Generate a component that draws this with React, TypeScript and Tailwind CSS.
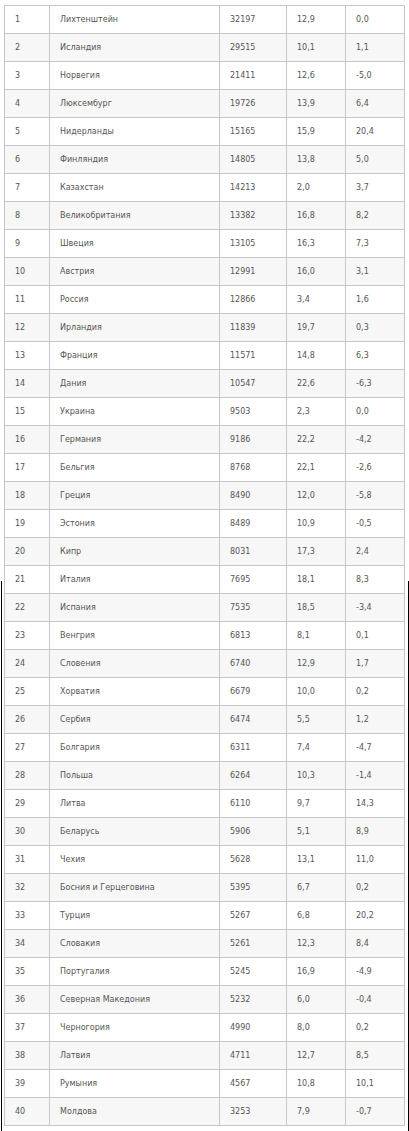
const rows: [string, string, string, string][] = [
  ["Лихтенштейн", "32197", "12,9", "0,0"],
  ["Исландия", "29515", "10,1", "1,1"],
  ["Норвегия", "21411", "12,6", "-5,0"],
  ["Люксембург", "19726", "13,9", "6,4"],
  ["Нидерланды", "15165", "15,9", "20,4"],
  ["Финляндия", "14805", "13,8", "5,0"],
  ["Казахстан", "14213", "2,0", "3,7"],
  ["Великобритания", "13382", "16,8", "8,2"],
  ["Швеция", "13105", "16,3", "7,3"],
  ["Австрия", "12991", "16,0", "3,1"],
  ["Россия", "12866", "3,4", "1,6"],
  ["Ирландия", "11839", "19,7", "0,3"],
  ["Франция", "11571", "14,8", "6,3"],
  ["Дания", "10547", "22,6", "-6,3"],
  ["Украина", "9503", "2,3", "0,0"],
  ["Германия", "9186", "22,2", "-4,2"],
  ["Бельгия", "8768", "22,1", "-2,6"],
  ["Греция", "8490", "12,0", "-5,8"],
  ["Эстония", "8489", "10,9", "-0,5"],
  ["Кипр", "8031", "17,3", "2,4"],
  ["Италия", "7695", "18,1", "8,3"],
  ["Испания", "7535", "18,5", "-3,4"],
  ["Венгрия", "6813", "8,1", "0,1"],
  ["Словения", "6740", "12,9", "1,7"],
  ["Хорватия", "6679", "10,0", "0,2"],
  ["Сербия", "6474", "5,5", "1,2"],
  ["Болгария", "6311", "7,4", "-4,7"],
  ["Польша", "6264", "10,3", "-1,4"],
  ["Литва", "6110", "9,7", "14,3"],
  ["Беларусь", "5906", "5,1", "8,9"],
  ["Чехия", "5628", "13,1", "11,0"],
  ["Босния и Герцеговина", "5395", "6,7", "0,2"],
  ["Турция", "5267", "6,8", "20,2"],
  ["Словакия", "5261", "12,3", "8,4"],
  ["Португалия", "5245", "16,9", "-4,9"],
  ["Северная Македония", "5232", "6,0", "-0,4"],
  ["Черногория", "4990", "8,0", "0,2"],
  ["Латвия", "4711", "12,7", "8,5"],
  ["Румыния", "4567", "10,8", "10,1"],
  ["Молдова", "3253", "7,9", "-0,7"],
];

const cell = "flex items-center pl-[10px] h-[28px] border-r border-b border-[#c6c6c6]";

export default function App() {
  return (
    <div
      className="relative w-[409px] h-[1131px] bg-white pl-[4px] pt-[5px] text-[8px] text-[#555]"
      style={{ fontFamily: '"DejaVu Sans", Verdana, sans-serif' }}
    >
      <div className="w-[401px] border-l border-t border-[#c6c6c6]">
        {rows.map(([name, value, pct, change], i) => (
          <div
            key={i}
            className={`grid grid-cols-[45px_170px_67px_59px_59px] ${i % 2 === 1 ? "bg-[#f7f7f7]" : "bg-white"}`}
          >
            <div className={cell}>{i + 1}</div>
            <div className={cell}>{name}</div>
            <div className={cell}>{value}</div>
            <div className={cell}>{pct}</div>
            <div className={cell}>{change}</div>
          </div>
        ))}
      </div>
      {/* frame edges visible on the lower half of the capture */}
      <div className="absolute left-[1px] top-[581px] bottom-0 w-px bg-black" />
      <div className="absolute left-[408px] top-[581px] bottom-0 w-px bg-black" />
    </div>
  );
}
